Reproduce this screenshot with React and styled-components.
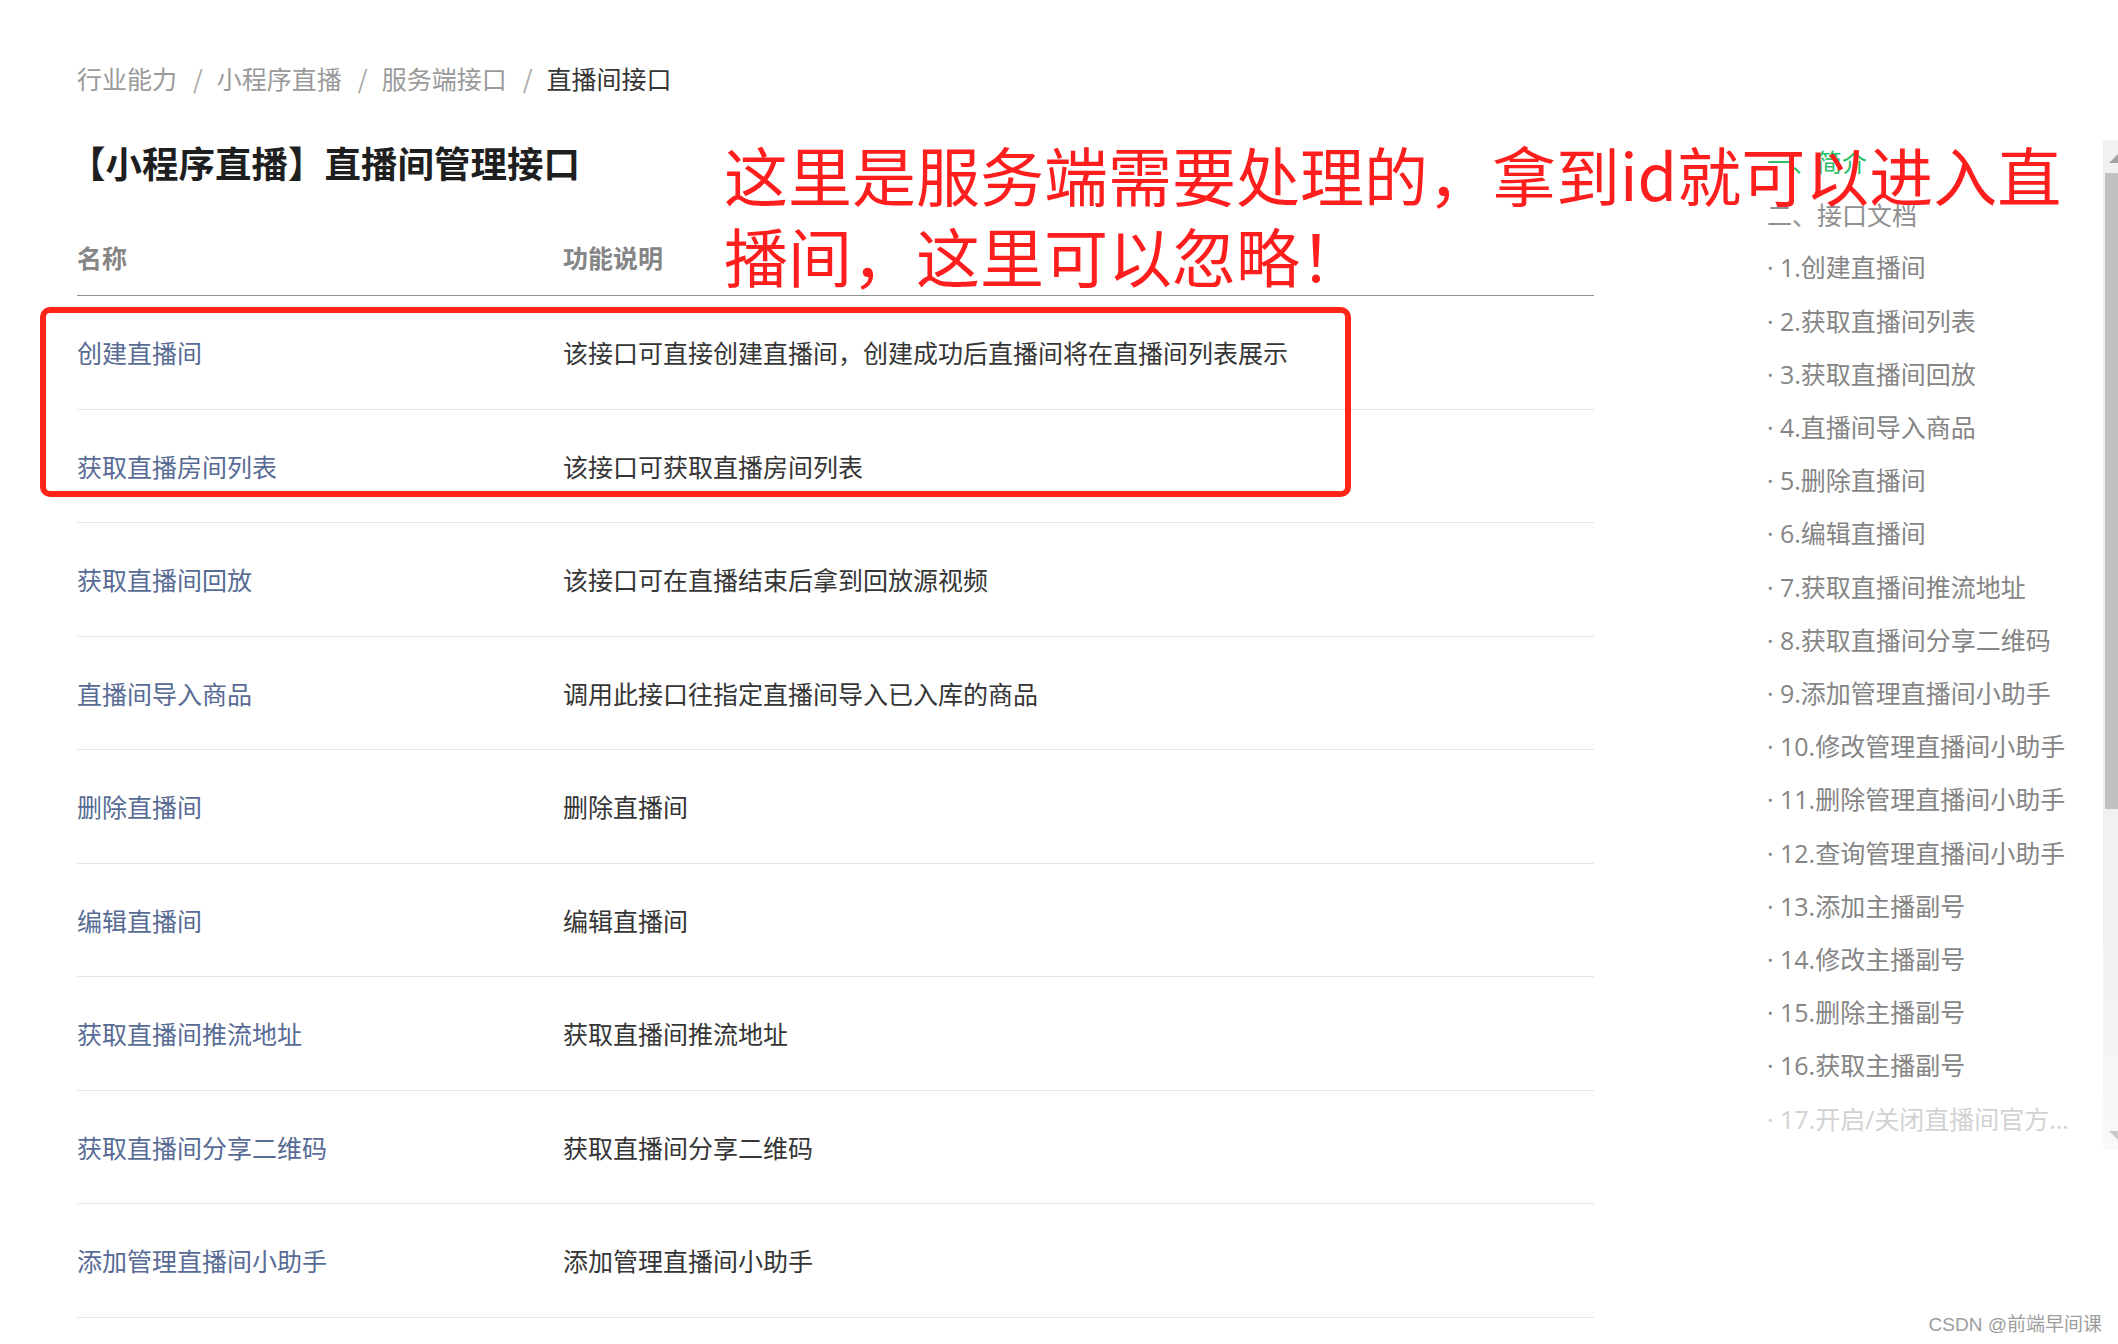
import React from "react";
import styled, { createGlobalStyle } from "styled-components";

const GlobalStyle = createGlobalStyle`
    html, body {
        margin: 0;
        padding: 0;
        height: 1344px;
        overflow: hidden;
        background: #fff;
    }
    body {
        font-family: "Noto Sans CJK SC", "Open Sans", sans-serif;
        color: #353535;
    }
`;

const apis = [
    ["创建直播间", "该接口可直接创建直播间，创建成功后直播间将在直播间列表展示"],
    ["获取直播房间列表", "该接口可获取直播房间列表"],
    ["获取直播间回放", "该接口可在直播结束后拿到回放源视频"],
    ["直播间导入商品", "调用此接口往指定直播间导入已入库的商品"],
    ["删除直播间", "删除直播间"],
    ["编辑直播间", "编辑直播间"],
    ["获取直播间推流地址", "获取直播间推流地址"],
    ["获取直播间分享二维码", "获取直播间分享二维码"],
    ["添加管理直播间小助手", "添加管理直播间小助手"],
];

const navItems = [
    "1.创建直播间",
    "2.获取直播间列表",
    "3.获取直播间回放",
    "4.直播间导入商品",
    "5.删除直播间",
    "6.编辑直播间",
    "7.获取直播间推流地址",
    "8.获取直播间分享二维码",
    "9.添加管理直播间小助手",
    "10.修改管理直播间小助手",
    "11.删除管理直播间小助手",
    "12.查询管理直播间小助手",
    "13.添加主播副号",
    "14.修改主播副号",
    "15.删除主播副号",
    "16.获取主播副号",
    "17.开启/关闭直播间官方收录",
];

export default function App() {
    return (
        <Page>
            <GlobalStyle />
            <Main>
                <Breadcrumb>
                    <Crumb>行业能力</Crumb>
                    <Sep>/</Sep>
                    <Crumb>小程序直播</Crumb>
                    <Sep>/</Sep>
                    <Crumb>服务端接口</Crumb>
                    <Sep>/</Sep>
                    <Crumb $current>直播间接口</Crumb>
                </Breadcrumb>
                <Title>【小程序直播】直播间管理接口</Title>
                <Table>
                    <HeadRow>
                        <HeadCell>名称</HeadCell>
                        <HeadCell>功能说明</HeadCell>
                    </HeadRow>
                    {apis.map(([name, desc]) => (
                        <Row key={name}>
                            <NameCell>{name}</NameCell>
                            <DescCell>{desc}</DescCell>
                        </Row>
                    ))}
                </Table>
            </Main>
            <Aside>
                <Nav>
                    <NavHead $active>一、简介</NavHead>
                    <NavHead>二、接口文档</NavHead>
                    {navItems.map((item, i) => (
                        <NavItem key={item} $faded={i === navItems.length - 1}>
                            <Dot>·</Dot>
                            <NavText>{item}</NavText>
                        </NavItem>
                    ))}
                </Nav>
                <ScrollTrack>
                    <Arrow $up />
                    <Thumb />
                    <TrackFill />
                    <Arrow />
                </ScrollTrack>
            </Aside>

            <Note>
                这里是服务端需要处理的，拿到id就可以进入直
                <br />
                播间，这里可以忽略！
            </Note>
            <Frame />
            <Watermark>CSDN @前端早间课</Watermark>
        </Page>
    );
}

const Page = styled.div`
    position: relative;
    display: flex;
    width: 2118px;
    height: 1344px;
    overflow: hidden;
`;

const Main = styled.main`
    width: 1517px;
    padding-left: 77px;
    padding-top: 63px;
    flex-shrink: 0;
`;

const Breadcrumb = styled.nav`
    display: flex;
    align-items: center;
    height: 30px;
    font-size: 25px;
    line-height: 30px;
`;

const Crumb = styled.span`
    color: ${(p) => (p.$current ? "#353535" : "#9a9a9a")};
`;

const Sep = styled.span`
    color: #a8a8a8;
    margin: 0 14px 0 16px;
`;

const Title = styled.h1`
    margin: 45px 0 0 -8px;
    font-size: 36.5px;
    line-height: 50px;
    font-weight: 700;
    color: #1f1f1f;
`;

const Table = styled.div`
    display: flex;
    flex-direction: column;
`;

const grid = `
    display: grid;
    grid-template-columns: 486px 1fr;
    align-items: center;
`;

const HeadRow = styled.div`
    ${grid}
    height: 108px;
    align-items: end;
    padding-bottom: 23px;
    box-sizing: border-box;
    border-bottom: 1px solid #8f8f8f;
`;

const HeadCell = styled.div`
    font-size: 25px;
    line-height: 30px;
    font-weight: 700;
    color: #858585;
`;

const Row = styled.div`
    ${grid}
    height: 113.5px;
    box-sizing: border-box;
    border-bottom: 1px solid #e5e5e5;
    font-size: 25px;
    line-height: 30px;
`;

const NameCell = styled.div`
    color: #576b95;
`;

const DescCell = styled.div`
    color: #353535;
`;

const Aside = styled.aside`
    display: flex;
    margin-left: 173px;
    padding-top: 135px;
    flex-shrink: 0;
`;

const Nav = styled.div`
    width: 336px;
    display: flex;
    flex-direction: column;
    font-size: 25px;
    line-height: 53.2px;
`;

const NavHead = styled.div`
    color: ${(p) => (p.$active ? "#2bbf6a" : "#8f8f8f")};
    white-space: nowrap;
`;

const NavItem = styled.div`
    display: flex;
    align-items: center;
    white-space: nowrap;
    overflow: hidden;
    color: ${(p) => (p.$faded ? "#d2d2d2" : "#858585")};
`;

const Dot = styled.span`
    width: 13px;
    flex-shrink: 0;
    font-family: "Open Sans", sans-serif;
    text-align: left;
`;

const NavText = styled.span`
    font-family: "Open Sans", "Noto Sans CJK SC", sans-serif;
    overflow: hidden;
    text-overflow: ellipsis;
    max-width: 300px;
`;

const ScrollTrack = styled.div`
    width: 15px;
    margin-top: 5px;
    height: 1010px;
    display: flex;
    flex-direction: column;
    align-items: flex-end;
    background: linear-gradient(#f1f1f1 80%, #f9f9f9);
`;

const Arrow = styled.div`
    width: 0;
    height: 0;
    margin: ${(p) => (p.$up ? "14px 0 10px" : "0 0 10px")};
    border-left: 9px solid transparent;
    ${(p) =>
        p.$up
            ? "border-bottom: 9px solid #a3a3a3;"
            : "border-top: 9px solid #c8c8c8;"}
`;

const Thumb = styled.div`
    width: 13px;
    height: 636px;
    background: #c1c1c1;
`;

const TrackFill = styled.div`
    flex: 1;
`;

const Note = styled.div`
    position: absolute;
    left: 724px;
    top: 133px;
    z-index: 2;
    font-size: 64px;
    line-height: 81px;
    font-weight: 400;
    color: #ff1e1e;
    white-space: nowrap;
`;

const Frame = styled.div`
    position: absolute;
    left: 40px;
    top: 307px;
    width: 1311px;
    height: 190px;
    box-sizing: border-box;
    border: 6px solid #ff2318;
    border-radius: 10px;
    z-index: 2;
`;

const Watermark = styled.div`
    position: absolute;
    right: 16px;
    bottom: 6px;
    font-family: "Liberation Sans", "Noto Sans CJK SC", sans-serif;
    font-size: 19px;
    line-height: 26px;
    color: #9d9d9d;
    text-shadow: 0 0 1px #fff;
`;
